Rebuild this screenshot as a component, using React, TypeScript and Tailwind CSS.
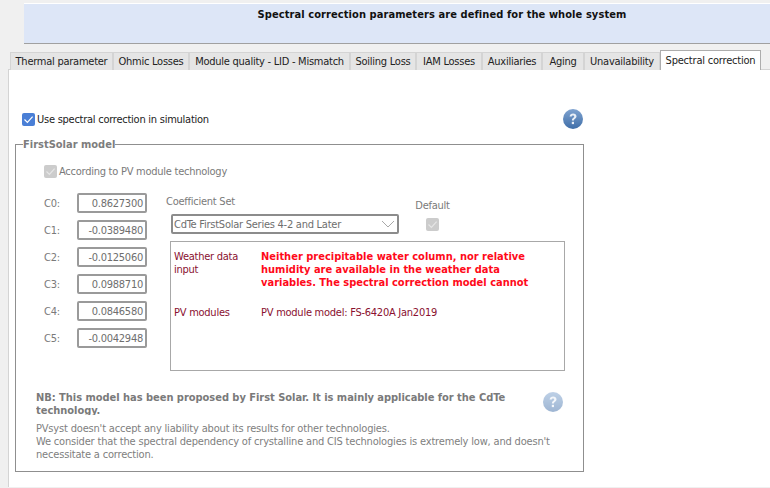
const tabs = [
  { name: 'Thermal parameter', width: 'w-[103px]' },
  { name: 'Ohmic Losses', width: 'w-[76px]' },
  { name: 'Module quality - LID - Mismatch', width: 'w-[161px]' },
  { name: 'Soiling Loss', width: 'w-[66px]' },
  { name: 'IAM Losses', width: 'w-[66px]' },
  { name: 'Auxiliaries', width: 'w-[60px]' },
  { name: 'Aging', width: 'w-[42px]' },
  { name: 'Unavailability', width: 'w-[76px]' },
];

const coefficients = [
  { name: 'C0:', value: '0.8627300' },
  { name: 'C1:', value: '-0.0389480' },
  { name: 'C2:', value: '-0.0125060' },
  { name: 'C3:', value: '0.0988710' },
  { name: 'C4:', value: '0.0846580' },
  { name: 'C5:', value: '-0.0042948' },
];

function HelpIcon({ faded = false }: { faded?: boolean }) {
  return (
    <svg width="20" height="20" viewBox="0 0 20 20" className={faded ? 'opacity-50' : ''}>
      <defs>
        <linearGradient id={faded ? 'help-faded' : 'help'} x1="0" y1="0" x2="0" y2="1">
          <stop offset="0" stopColor="#7fa3d0" />
          <stop offset="1" stopColor="#3f6ea8" />
        </linearGradient>
      </defs>
      <circle cx="10" cy="10" r="10" fill={`url(#${faded ? 'help-faded' : 'help'})`} />
      <path
        d="M6.6 7.4c.2-1.9 1.6-2.9 3.5-2.9 2 0 3.4 1.1 3.4 2.8 0 1.2-.6 1.9-1.6 2.6-.8.5-1 .8-1 1.6H8.9c0-1.3.3-1.9 1.2-2.5.8-.6 1.1-.9 1.1-1.5 0-.7-.5-1.1-1.2-1.1-.8 0-1.2.5-1.3 1.2z"
        fill="#e8eef6"
      />
      <rect x="8.8" y="12.8" width="2.2" height="2.3" fill="#e8eef6" />
    </svg>
  );
}

function CheckBox({ disabled = false }: { disabled?: boolean }) {
  return (
    <span
      className={`w-[13px] h-[13px] shrink-0 rounded-[2px] flex items-center justify-center ${
        disabled ? 'bg-[#cccccc]' : 'bg-[#4a7fd6]'
      }`}
    >
      <svg width="11" height="11" viewBox="0 0 11 11" fill="none">
        <path d="M1.5 5.5 4.4 8.4 9.6 2.6" stroke={disabled ? '#e6e6e6' : '#ffffff'} strokeWidth="1.2" />
      </svg>
    </span>
  );
}

export default function App() {
  return (
    <div className="w-[770px] h-[488px] overflow-hidden bg-[#f0f0f0] font-['DejaVu_Sans','Noto_Sans',sans-serif] [font-stretch:condensed] text-[11px] leading-[13px] tracking-[-0.25px] text-[#222222]">
      {/* Header */}
      <div className="pt-[3px] pl-[24px]">
        <div className="h-[41px] bg-[#dde6f7] border-b border-[#a0a0a0] border-t border-t-white flex justify-center pt-[4px] pl-[90px]">
          <span className="font-bold tracking-[0.08px] text-[#111111]">
            Spectral correction parameters are defined for the whole system
          </span>
        </div>
      </div>

      {/* Tabs */}
      <div className="flex items-end h-[20px] mt-[6px] ml-[10px]">
        {tabs.map((tab) => (
          <div
            key={tab.name}
            className={`${tab.width} h-[18px] shrink-0 bg-[#e5e5e5] border border-b-0 border-[#d4d4d4] flex items-center justify-center whitespace-nowrap`}
          >
            {tab.name}
          </div>
        ))}
        <div className="w-[101px] h-[20px] shrink-0 bg-white border border-b-0 border-[#adadad] relative z-10 flex items-center justify-center whitespace-nowrap pb-[1px] tracking-[-0.2px]">
          Spectral correction
        </div>
      </div>

      {/* Page */}
      <div className="h-[418px] ml-[8px] bg-white border-t border-l border-[#d4d4d4] mt-[-1px] pt-[39px] pl-[6px]">
        <div className="w-[561px] flex items-center justify-between h-[20px] ml-[7px]">
          <label className="flex items-center gap-[2px]">
            <CheckBox />
            <span>Use spectral correction in simulation</span>
          </label>
          <HelpIcon />
        </div>

        {/* FirstSolar model group */}
        <div className="relative w-[569px] h-[328px] mt-[15px] border border-[#8f8f8f] text-[#7a7a7a]">
          <span className="absolute top-[-7px] left-[7px] bg-white font-bold tracking-normal text-[#7d7d7d]">FirstSolar model</span>

          <div className="flex items-center gap-[2px] ml-[28px] mt-[20px] h-[13px]">
            <CheckBox disabled />
            <span>According to PV module technology</span>
          </div>

          <div className="flex mt-[15px] ml-[28px]">
            <div className="w-[103px] flex flex-col gap-[7px] shrink-0">
              {coefficients.map((c) => (
                <div key={c.name} className="flex items-center h-[20px]">
                  <span className="w-[33px]">{c.name}</span>
                  <span className="w-[70px] h-[20px] border-2 border-[#9a9a9a] rounded-[2px] text-right pr-[2px] leading-[17px] text-[#6e6e6e]">
                    {c.value}
                  </span>
                </div>
              ))}
            </div>

            <div className="w-[395px] ml-[23px] pt-[1px] flex flex-col">
              <div className="flex">
                <div className="w-[244px]">
                  <div className="ml-[-4px] mt-[1px] h-[14px]">Coefficient Set</div>
                  <div className="ml-[1px] mt-[5px] w-[228px] h-[20px] border-2 border-[#8c8c8c] rounded-[2px] flex items-center justify-between px-[1px] text-[#6e6e6e]">
                    <span>CdTe FirstSolar Series 4-2 and Later</span>
                    <svg width="14" height="8" viewBox="0 0 14 8" fill="none" className="mr-[1px]">
                      <path d="M1 1 7 7 13 1" stroke="#a8a8a8" />
                    </svg>
                  </div>
                </div>
                <div className="flex flex-col items-center w-[35px] pt-[5px] ml-[1px]">
                  <span>Default</span>
                  <span className="mt-[6px]">
                    <CheckBox disabled />
                  </span>
                </div>
              </div>

              <div className="mt-[7px] h-[130px] w-[395px] border border-[#a8a8a8] pl-[3px] pt-[8px] text-[#8a1030]">
                <div className="flex h-[56px]">
                  <div className="w-[87px]">
                    Weather data
                    <br />
                    input
                  </div>
                  <div className="font-bold tracking-normal text-[#ff0a1a] w-[290px]">
                    Neither precipitable water column, nor relative humidity are available in the weather data variables. The spectral correction model cannot
                  </div>
                </div>
                <div className="flex">
                  <div className="w-[87px]">PV modules</div>
                  <div>PV module model: FS-6420A Jan2019</div>
                </div>
              </div>
            </div>
          </div>

          {/* Note */}
          <div className="flex mt-[20px] ml-[20px] items-start">
            <div className="w-[488px] h-[24px] overflow-hidden font-bold tracking-[-0.03px] text-[#7a7a7a]">
              NB: This model has been proposed by First Solar. It is mainly applicable for the CdTe technology.
            </div>
            <span className="ml-[19px] mt-[1px]">
              <HelpIcon faded />
            </span>
          </div>
          <div className="ml-[20px] mt-[7px] w-[530px] tracking-[-0.18px] text-[#808080]">
            PVsyst doesn't accept any liability about its results for other technologies.
            <br />
            We consider that the spectral dependency of crystalline and CIS technologies is extremely low, and doesn't necessitate a correction.
          </div>
        </div>
      </div>
    </div>
  );
}
